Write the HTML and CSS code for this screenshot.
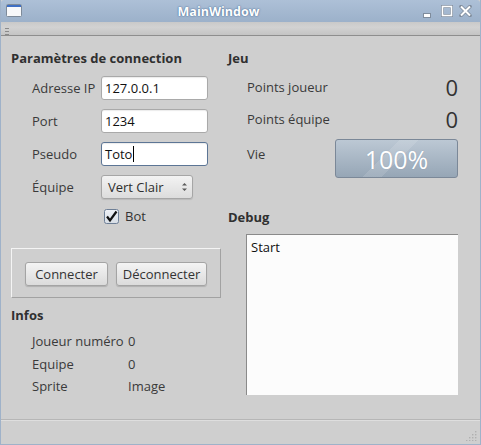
FILE: index.html
```html
<!DOCTYPE html>
<html lang="fr">
<head>
<meta charset="utf-8">
<title>MainWindow</title>
<link rel="stylesheet" href="styles.css">
</head>
<body>
<div class="window">
  <div class="titlebar">
    <svg class="app-icon" width="16" height="14" viewBox="0 0 16 14">
      <rect x="0.5" y="0.5" width="15" height="12" rx="1" fill="#f4f6f8" stroke="#7d8a99"/>
      <rect x="1" y="1" width="14" height="2" fill="#3f6fc4"/>
      <rect x="1" y="3" width="14" height="9" fill="#f7f8fa"/>
    </svg>
    <div class="title">MainWindow</div>
    <div class="wbuttons">
      <svg width="8" height="5" viewBox="0 0 8 5"><rect x="0.5" y="0.5" width="7" height="4" fill="#ffffff" stroke="#7f8c9c"/></svg>
      <svg width="12" height="12" viewBox="0 0 12 12"><rect x="1.5" y="1.5" width="9" height="9" fill="none" stroke="#7f8c9c" stroke-width="3"/><rect x="1.5" y="1.5" width="9" height="9" fill="none" stroke="#ffffff" stroke-width="1.6"/></svg>
      <svg width="13" height="12" viewBox="0 0 13 12"><path d="M2 1.5 L11 10.5 M11 1.5 L2 10.5" stroke="#7f8c9c" stroke-width="3.6" stroke-linecap="round"/><path d="M2 1.5 L11 10.5 M11 1.5 L2 10.5" stroke="#ffffff" stroke-width="2"/></svg>
    </div>
  </div>
  <div class="toolbar"><span class="handle"></span></div>
  <div class="content">
    <div class="col left">
      <h2 class="heading">Paramètres de connection</h2>
      <div class="form">
        <span class="label">Adresse IP</span><div class="input">127.0.0.1</div>
        <span class="label">Port</span><div class="input">1234</div>
        <span class="label">Pseudo</span><div class="input focus">Toto<span class="caret"></span></div>
        <span class="label">Équipe</span>
        <div class="combo">Vert Clair
          <svg class="spin" width="7" height="12" viewBox="0 0 7 12"><path d="M1 4.5 L3.5 2 L6 4.5Z M1 7.5 L3.5 10 L6 7.5Z" fill="#5a5a5a"/></svg>
        </div>
        <span></span>
        <div class="check">
          <svg width="15" height="15" viewBox="0 0 15 15">
            <defs><linearGradient id="cb" x1="0" y1="0" x2="0" y2="1"><stop offset="0" stop-color="#eef1f5"/><stop offset="1" stop-color="#d7dde5"/></linearGradient></defs>
            <rect x="0.5" y="0.5" width="14" height="14" rx="2" fill="url(#cb)" stroke="#6e7f96"/>
            <path d="M3 7.5 L6 11.5 L12.5 2.5" fill="none" stroke="#111" stroke-width="2.2"/>
          </svg>
          <span>Bot</span>
        </div>
      </div>
      <div class="group">
        <button class="btn btn-a">Connecter</button>
        <button class="btn btn-b">Déconnecter</button>
      </div>
      <h2 class="heading infos-h">Infos</h2>
      <div class="infos">
        <span>Joueur numéro</span><span>0</span>
        <span>Equipe</span><span>0</span>
        <span>Sprite</span><span>Image</span>
      </div>
    </div>
    <div class="col right">
      <h2 class="heading">Jeu</h2>
      <div class="game">
        <span class="label">Points joueur</span><span class="lcd">0</span>
        <span class="label">Points équipe</span><span class="lcd">0</span>
        <span class="label vie">Vie</span><div class="progress"><span>100%</span></div>
      </div>
      <h2 class="heading debug-h">Debug</h2>
      <div class="debug">Start</div>
    </div>
  </div>
  <div class="statusbar">
    <svg class="grip" width="11" height="11" viewBox="0 0 11 11" fill="#b0b0b0">
      <rect x="9" y="1" width="1.4" height="1.4"/>
      <rect x="6" y="4" width="1.4" height="1.4"/><rect x="9" y="4" width="1.4" height="1.4"/>
      <rect x="3" y="7" width="1.4" height="1.4"/><rect x="6" y="7" width="1.4" height="1.4"/><rect x="9" y="7" width="1.4" height="1.4"/>
      <rect x="0" y="10" width="1.4" height="1.4"/><rect x="3" y="10" width="1.4" height="1.4"/><rect x="6" y="10" width="1.4" height="1.4"/><rect x="9" y="10" width="1.4" height="1.4"/>
    </svg>
  </div>
</div>
</body>
</html>
```
FILE: styles.css
```css
* { box-sizing: border-box; }
html, body { margin: 0; padding: 0; background: #cfcfcf; }
body { font-family: "Open Sans", "DejaVu Sans", sans-serif; font-size: 13px; color: #3a3a3a; }

.window {
  width: 481px; height: 445px;
  border: 1px solid #9fb2c9;
  border-top: none;
  display: flex; flex-direction: column;
  background: #cfcfcf;
}

.titlebar {
  height: 22px;
  background: linear-gradient(#adc0d7, #9cb1ca);
  display: flex; align-items: center;
  padding: 0 8px 0 5px;
  border-radius: 3px 3px 0 0;
}
.app-icon { margin-top: -1px; }
.title {
  flex: 1; text-align: center;
  color: #fff; font-weight: bold; font-size: 12.5px;
  text-shadow: 0 0 2px #53749c, 0 0 1px #53749c;
  padding-right: 8px;
}
.wbuttons { display: flex; align-items: center; gap: 6px; }
.wbuttons svg:first-child { margin-top: 9px; margin-right: 4px; }

.toolbar {
  height: 14px;
  background: linear-gradient(#c9c9c9, #d2d2d2 40%, #c4c4c4);
  border-bottom: 1px solid #8e8e8e;
  padding: 6px 0 0 4px;
}
.handle {
  display: block; width: 4px; height: 7px;
  background: repeating-linear-gradient(#8a8a8a 0 1px, transparent 1px 3px);
}

.content { flex: 1; display: flex; gap: 7px; padding-left: 10px; }
.col { display: flex; flex-direction: column; padding-top: 13px; }
.left { width: 210px; }
.right { width: 230px; }

.heading { margin: 0; font-size: 13px; font-weight: bold; line-height: 18px; color: #303030; }

.form {
  margin: 9px 0 0 21px;
  display: grid;
  grid-template-columns: 69px 107px;
  grid-template-rows: 24px 24px 24px 24px 16px;
  row-gap: 9px;
}
.form .label { align-self: center; line-height: 18px; }
.input {
  background: #fff;
  border: 1px solid #a9a9a9;
  border-radius: 3px;
  box-shadow: inset 0 1px 1px rgba(0,0,0,0.08);
  padding: 0 0 0 3px;
  line-height: 22px;
  color: #111;
  display: flex; align-items: center;
}
.input.focus { border-color: #5c7595; }
.caret { display: inline-block; width: 1px; height: 16px; background: #000; margin-left: 1px; }
.combo {
  width: 92px;
  background: linear-gradient(#f3f3f3, #dcdcdc);
  border: 1px solid #a6a6a6;
  border-radius: 3px;
  box-shadow: 0 1px 1px rgba(0,0,0,0.1);
  padding-left: 6px;
  line-height: 22px;
  color: #2e2e2e;
  display: flex; justify-content: space-between; align-items: center;
}
.spin { margin-right: 4px; }
.check { display: flex; align-items: center; gap: 6px; height: 16px; padding-left: 3px; }
.check span { color: #333; }

.group {
  margin-top: 24px;
  height: 50px;
  border: 1px solid;
  border-color: #f4f4f4 #a2a2a2 #a2a2a2 #f4f4f4;
  display: flex; gap: 8px;
  padding: 13px 0 0 13px;
}
.btn {
  height: 24px;
  font-family: inherit; font-size: 13px; color: #333;
  background: linear-gradient(#f4f4f4, #dbdbdb);
  border: 1px solid #a4a4a4;
  border-radius: 3px;
  box-shadow: 0 1px 1px rgba(0,0,0,0.15);
  padding: 0;
}
.btn-a { width: 83px; }
.btn-b { width: 91px; }

.infos-h { margin-top: 8px; }
.infos {
  margin: 6px 0 0 21px;
  display: grid;
  grid-template-columns: 96px auto;
  grid-auto-rows: 22.5px;
  align-items: center;
}

.game {
  margin: 8px 0 0 19px;
  display: grid;
  grid-template-columns: 88px 123px;
  grid-template-rows: 24px 24px 39px;
  row-gap: 8px;
}
.game .label { align-self: center; }
.game .label.vie { align-self: start; padding-top: 6px; }
.lcd {
  justify-self: end; align-self: center;
  font-size: 22px; line-height: 24px; color: #333;
}
.progress {
  border: 1px solid #7b8898;
  border-radius: 3px;
  background:
    linear-gradient(135deg, transparent 0 40%, rgba(255,255,255,0.12) 40% 52%, transparent 52% 100%),
    linear-gradient(#bcc8d4, #96a6b6);
  display: flex; align-items: center; justify-content: center;
  color: #fff;
  font-size: 25px; font-weight: 400;
  text-shadow: 0 0 1px rgba(80,100,130,0.4);
}

.debug-h { margin-top: 30px; }
.debug {
  margin: 8px 0 0 18px;
  width: 212px; height: 161px;
  background: #fcfcfc;
  border-top: 1px solid #8a8a8a;
  border-left: 1px solid #8a8a8a;
  padding: 3px 0 0 4px;
  color: #111;
  line-height: 18px;
}

.statusbar {
  height: 25px;
  border-top: 1px solid #b6b6b6;
  box-shadow: inset 0 1px #dedede;
  display: flex; justify-content: flex-end; align-items: flex-end;
  padding: 0 3px 3px 0;
}
```
